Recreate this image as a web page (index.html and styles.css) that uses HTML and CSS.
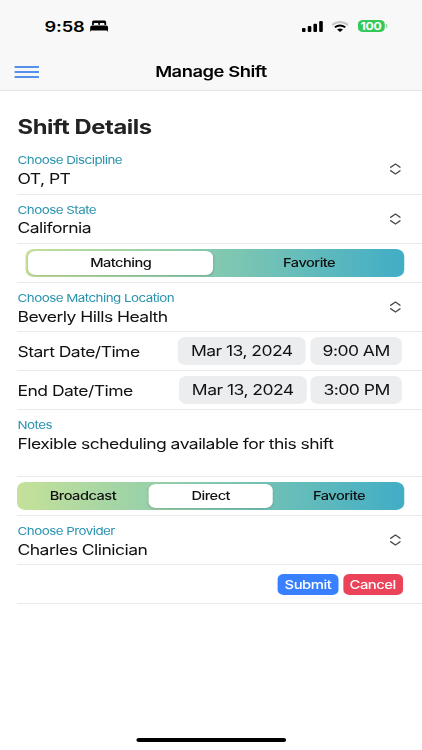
FILE: index.html
```html
<!DOCTYPE html>
<html lang="en">
<head>
    <meta charset="UTF-8">
    <title>Manage Shift</title>
    <link rel="stylesheet" href="styles.css">
</head>
<body>
    <div class="app">
        <header class="header">
            <div class="status">
                <span class="time">9:58</span>
                <svg class="bed" viewBox="0 0 18 12" preserveAspectRatio="none">
                    <path d="M2 5V2Q2 .5 3.5 .5H14.500Q16 .5 16 2V5H14.300V3.700Q14.300 3 13.500 3H10.500Q9.700 3 9.700 3.700V5H8.300V3.700Q8.300 3 7.500 3H4.500Q3.700 3 3.700 3.700V5Z"/>
                    <path d="M0 11.500V7.500Q0 5.500 2 5.500H16Q18 5.500 18 7.500V11.500H17.200V10.500H.8V11.500Z"/>
                </svg>
                <svg class="signal" viewBox="0 0 21 11" preserveAspectRatio="none">
                    <rect x="0" y="7" width="3.600" height="4" rx="1"/>
                    <rect x="5.800" y="5" width="3.600" height="6" rx="1"/>
                    <rect x="11.500" y="2.700" width="3.600" height="8.300" rx="1"/>
                    <rect x="17.300" y="0" width="3.600" height="11" rx="1"/>
                </svg>
                <svg class="wifi" viewBox="0 0 18 11" preserveAspectRatio="none">
                    <path class="weak" d="M.9 3.900Q9 -1.800 17.100 3.900"/>
                    <path d="M3.700 6.300Q9 2.600 14.300 6.300"/>
                    <path class="dot" d="M6 8.400Q9 6.400 12 8.400L9 11Z"/>
                </svg>
                <span class="battery">100</span>
            </div>
            <div class="toolbar">
                <div class="menu"><i></i><i></i><i></i></div>
                <h1>Manage Shift</h1>
            </div>
        </header>

        <main class="form">
            <h2>Shift Details</h2>

            <div class="row select">
                <div>
                    <label>Choose Discipline</label>
                    <p>OT, PT</p>
                </div>
                <svg class="arrows" viewBox="0 0 12 12" preserveAspectRatio="none"><path d="M.6 4.700L6 1L11.400 4.700M.6 7.300L6 11L11.400 7.300"/></svg>
            </div>
            <div class="row select">
                <div>
                    <label>Choose State</label>
                    <p>California</p>
                </div>
                <svg class="arrows" viewBox="0 0 12 12" preserveAspectRatio="none"><path d="M.6 4.700L6 1L11.400 4.700M.6 7.300L6 11L11.400 7.300"/></svg>
            </div>
            <div class="row segment-row inset">
                <div class="segment two">
                    <span class="selected">Matching</span>
                    <span>Favorite</span>
                </div>
            </div>
            <div class="row select">
                <div>
                    <label>Choose Matching Location</label>
                    <p>Beverly Hills Health</p>
                </div>
                <svg class="arrows" viewBox="0 0 12 12" preserveAspectRatio="none"><path d="M.6 4.700L6 1L11.400 4.700M.6 7.300L6 11L11.400 7.300"/></svg>
            </div>
            <div class="row date">
                <p>Start Date/Time</p>
                <span class="chip day">Mar 13, 2024</span>
                <span class="chip hour">9:00 AM</span>
            </div>
            <div class="row date end">
                <p>End Date/Time</p>
                <span class="chip day">Mar 13, 2024</span>
                <span class="chip hour">3:00 PM</span>
            </div>
            <div class="row notes">
                <label>Notes</label>
                <p>Flexible scheduling available for this shift</p>
            </div>
            <div class="row segment-row">
                <div class="segment three">
                    <span>Broadcast</span>
                    <span class="selected">Direct</span>
                    <span>Favorite</span>
                </div>
            </div>
            <div class="row select">
                <div>
                    <label>Choose Provider</label>
                    <p>Charles Clinician</p>
                </div>
                <svg class="arrows" viewBox="0 0 12 12" preserveAspectRatio="none"><path d="M.6 4.700L6 1L11.400 4.700M.6 7.300L6 11L11.400 7.300"/></svg>
            </div>
            <div class="row buttons">
                <button class="submit">Submit</button>
                <button class="cancel">Cancel</button>
            </div>
        </main>

        <div class="home"></div>
    </div>
</body>
</html>
```

FILE: styles.css
```css
*{
    margin: 0;
    padding: 0;
    box-sizing: border-box;
}
body{
    background: #fff;
    overflow: hidden;
}
/* the whole screen is drawn wide */
.app{
    --wide: 1.2176;
    width: calc(422px / var(--wide));
    height: 750px;
    display: flex;
    flex-direction: column;
    transform: scaleX(var(--wide));
    transform-origin: 0 0;
    font-family: Inter, "Liberation Sans", sans-serif;
    font-size: 14.4px;
    letter-spacing: -.44px;
    color: #111;
}
.header{
    height: 91px;
    background: #f8f8f8;
    border-bottom: 1px solid #e4e4e4;
}
.status{
    height: 52px;
    display: flex;
    align-items: center;
    padding-left: 36.6px;
}
.time{
    width: 37.3px;
    font-size: 15px;
    font-weight: 600;
    letter-spacing: -.15px;
    color: #000;
}
.bed{
    width: 14.8px;
    height: 12px;
}
.signal{
    width: 17.2px;
    height: 11px;
    margin-left: 159.8px;
}
.wifi{
    width: 14.6px;
    height: 11px;
    margin-left: 6.4px;
    fill: none;
    stroke: #000;
    stroke-width: 2;
}
.wifi .weak{
    stroke: #c4c4c4;
}
.wifi .dot{
    fill: #000;
    stroke: none;
}
.battery{
    position: relative;
    width: 22.4px;
    height: 12px;
    margin-left: 6.9px;
    border-radius: 4px;
    background: #34c759;
    color: #fff;
    font-size: 10px;
    font-weight: 700;
    letter-spacing: -.1px;
    line-height: 12px;
    text-align: center;
}
.battery::after{
    content: "";
    position: absolute;
    right: -2px;
    top: 4px;
    width: 1.2px;
    height: 4px;
    border-radius: 0 2px 2px 0;
    background: #7fdb97;
}
.toolbar{
    height: 39px;
    display: grid;
    grid-template-columns: 50px 1fr 50px;
    align-items: center;
}
.menu{
    width: 20.4px;
    margin-left: 11.6px;
    padding-top: 1px;
    display: grid;
    gap: 3px;
}
.menu i{
    height: 2px;
    background: #5590ea;
}
h1{
    font-size: 15.1px;
    font-weight: 600;
    letter-spacing: -.38px;
    text-align: center;
    color: #000;
}
.form{
    flex: 1;
    padding-left: 14.4px;
}
h2{
    height: 54.3px;
    padding-top: 24.3px;
    font-size: 19.5px;
    line-height: 25px;
    font-weight: 700;
    letter-spacing: -.35px;
    color: #222;
}
.row{
    height: 39px;
    border-bottom: 1px solid #e8e9eb;
}
.row p{
    line-height: 19px;
}
label{
    display: block;
    font-size: 11px;
    line-height: 14px;
    color: #2a93ae;
}
.select{
    height: 49.3px;
    padding: 8px 17.3px 0 0;
    display: flex;
    justify-content: space-between;
}
.select p{
    margin-top: 1.8px;
}
.arrows{
    width: 9.6px;
    height: 12px;
    margin-top: 10px;
    fill: none;
    stroke: #4d4d4d;
    stroke-width: 1.4;
}
.segment-row{
    padding: 5.5px 14.2px 0 0;
}
.inset{
    padding-left: 7px;
}
.segment{
    height: 28px;
    display: grid;
    padding: 2px 0 2px 1.6px;
    border-radius: 7px;
    background: linear-gradient(90deg, #c5e199, #84c9b0 50%, #41adc6);
    font-size: 12px;
    font-weight: 500;
    letter-spacing: -.42px;
    line-height: 23px;
    text-align: center;
}
.two{
    grid-template-columns: 152.4px 1fr;
}
.three{
    padding-left: 0;
    grid-template-columns: 107.4px 102.7px 1fr;
}
.segment .selected{
    border-radius: 6px;
    background: #fff;
    box-shadow: 0 1px 2px rgba(0,0,0,.15);
}
.date{
    display: flex;
    align-items: center;
    padding-right: 16.2px;
}
.date p{
    flex: 1;
}
.chip{
    height: 28px;
    margin-left: 3.7px;
    border-radius: 6px;
    background: #ecedef;
    line-height: 28px;
    text-align: center;
}
.day{
    width: 104.7px;
}
.hour{
    width: 75.8px;
}
.end .hour{
    width: 75px;
}
.notes{
    height: 66.8px;
    padding-top: 8px;
}
.notes p{
    margin-top: 1.8px;
}
.buttons{
    display: flex;
    align-items: center;
    justify-content: flex-end;
    gap: 3.5px;
    padding-right: 16px;
}
button{
    width: 50.4px;
    height: 21px;
    border: 0;
    border-radius: 5px;
    color: #fff;
    font-family: inherit;
    font-size: 12.2px;
    font-weight: 500;
    letter-spacing: -.4px;
}
.submit{
    background: #3880ff;
}
.cancel{
    width: 49px;
    background: #eb445a;
}
.home{
    width: 123.5px;
    height: 4px;
    margin: 0 auto 8px;
    border-radius: 2px;
    background: #000;
}
```
